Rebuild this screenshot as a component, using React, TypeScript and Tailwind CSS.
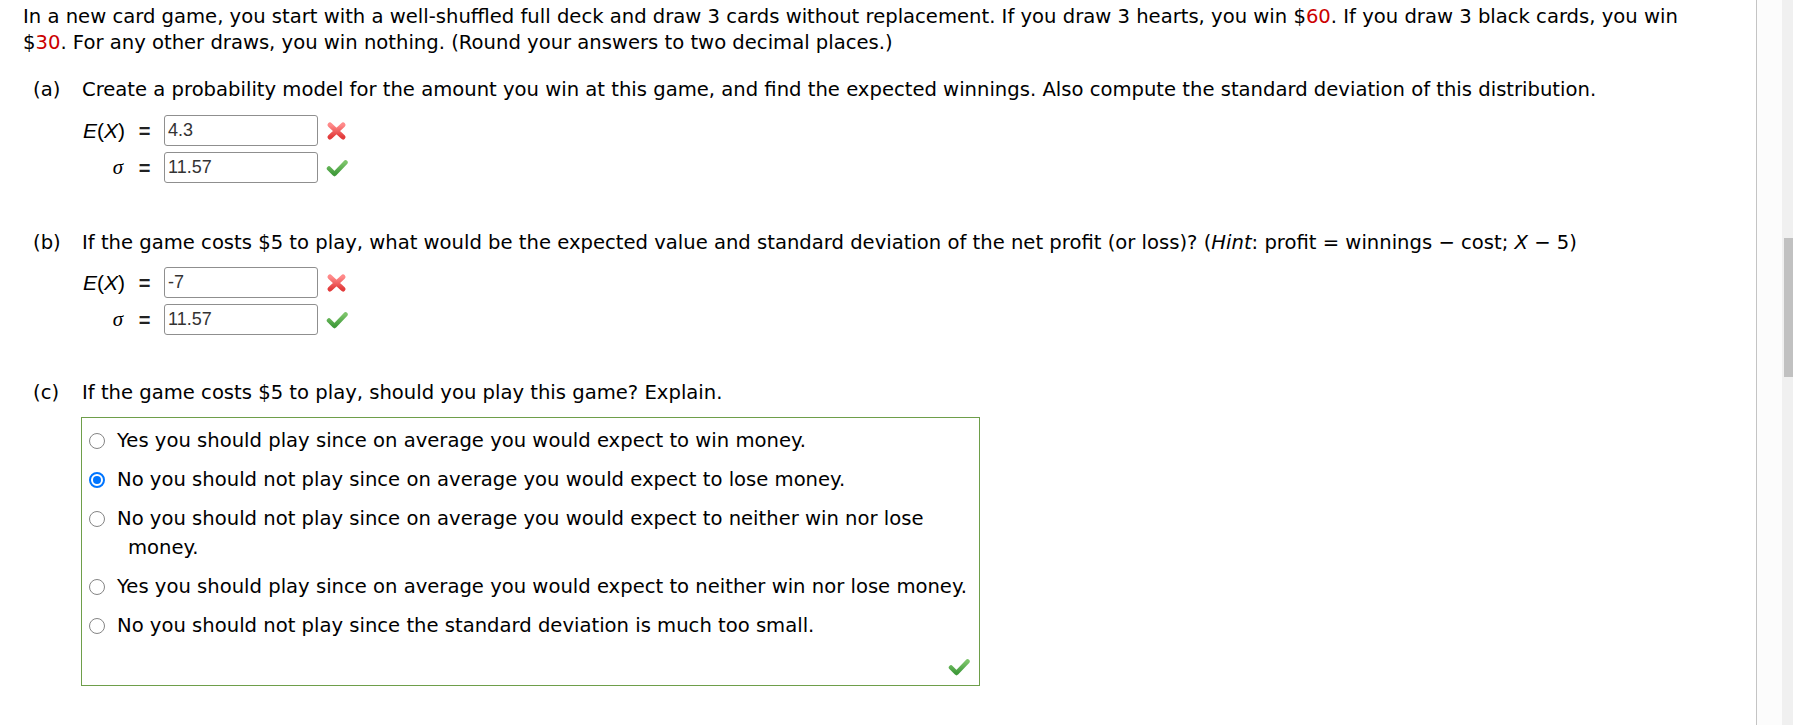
import React from 'react';

const WrongIcon: React.FC = () => (
    <svg width="21" height="20" viewBox="0 0 21 20">
        <defs>
            <linearGradient id="xg" x1="0" y1="0" x2="0" y2="1">
                <stop offset="0" stopColor="#ff8a8a" />
                <stop offset="1" stopColor="#e23b3b" />
            </linearGradient>
        </defs>
        <path d="M4 4 L17 16 M17 4 L4 16" stroke="url(#xg)" strokeWidth="5" strokeLinecap="round" fill="none" />
    </svg>
);

const RightIcon: React.FC = () => (
    <svg width="22" height="18" viewBox="0 0 22 18">
        <defs>
            <linearGradient id="cg" x1="0" y1="0" x2="0" y2="1">
                <stop offset="0" stopColor="#7cc46a" />
                <stop offset="1" stopColor="#3f9a3a" />
            </linearGradient>
        </defs>
        <path d="M3 9.5 L8.5 15 L19.5 3.5" stroke="url(#cg)" strokeWidth="4.5" strokeLinecap="round" strokeLinejoin="round" fill="none" />
    </svg>
);

const AnswerRow: React.FC<{ label: React.ReactNode; value: string; ok: boolean }> = ({ label, value, ok }) => (
    <div className="flex items-center h-[31px]">
        <div className="w-[44px] text-right text-[21px] font-['Liberation_Sans',sans-serif] text-black whitespace-nowrap">{label}</div>
        <div className="w-[39px] text-center text-[20px] font-bold font-['Liberation_Sans',sans-serif] text-[#222]">=</div>
        <div className="w-[154px] h-[31px] border border-[#8f8f8f] rounded-[3px] bg-white flex items-center pl-[3px] text-[18px] text-[#333] font-['Liberation_Sans',sans-serif]">{value}</div>
        <div className="ml-[8px] flex items-center">{ok ? <RightIcon /> : <WrongIcon />}</div>
    </div>
);

const EX = () => (
    <span><i>E</i>(<i>X</i>)</span>
);

const Sigma = () => <i className="font-['Liberation_Serif',serif] pr-[2px]">σ</i>;

const Radio: React.FC<{ checked?: boolean }> = ({ checked }) =>
    checked ? (
        <span className="w-[16px] h-[16px] rounded-full border-2 border-[#0075ff] bg-white flex items-center justify-center">
            <span className="w-[8px] h-[8px] rounded-full bg-[#0075ff]" />
        </span>
    ) : (
        <span className="w-[16px] h-[16px] rounded-full border border-[#858585] bg-white" />
    );

const OPTIONS = [
    { text: 'Yes you should play since on average you would expect to win money.', checked: false },
    { text: 'No you should not play since on average you would expect to lose money.', checked: true },
    { text: 'No you should not play since on average you would expect to neither win nor lose money.', checked: false },
    { text: 'Yes you should play since on average you would expect to neither win nor lose money.', checked: false },
    { text: 'No you should not play since the standard deviation is much too small.', checked: false },
];

const PartLabel: React.FC<{ tag: string; children: React.ReactNode }> = ({ tag, children }) => (
    <div className="flex leading-[26px]">
        <span className="w-[59px] pl-[10px] shrink-0">{tag}</span>
        <span>{children}</span>
    </div>
);

export default function App() {
    return (
        <div className="flex w-full h-[725px] overflow-hidden bg-white">
            <div className="w-[1757px] shrink-0 border-r border-[#c4c4c4] bg-white pl-[23px] pr-[57px] pt-[4px] text-[19.6px] text-black font-['DejaVu_Sans',sans-serif]">
                <p className="leading-[26px]">
                    In a new card game, you start with a well-shuffled full deck and draw 3 cards without replacement. If you draw 3 hearts, you win $<span className="text-[#cc0000]">60</span>. If you draw 3 black cards, you win $<span className="text-[#cc0000]">30</span>. For any other draws, you win nothing. (Round your answers to two decimal places.)
                </p>

                <div className="mt-[21px]">
                    <PartLabel tag="(a)">Create a probability model for the amount you win at this game, and find the expected winnings. Also compute the standard deviation of this distribution.</PartLabel>
                    <div className="mt-[12px] pl-[58px] flex flex-col gap-[6px]">
                        <AnswerRow label={<EX />} value="4.3" ok={false} />
                        <AnswerRow label={<Sigma />} value="11.57" ok={true} />
                    </div>
                </div>

                <div className="mt-[47px]">
                    <PartLabel tag="(b)">If the game costs $5 to play, what would be the expected value and standard deviation of the net profit (or loss)? (<i>Hint</i>: profit = winnings − cost; <i>X</i> − 5)</PartLabel>
                    <div className="mt-[11px] pl-[58px] flex flex-col gap-[6px]">
                        <AnswerRow label={<EX />} value="-7" ok={false} />
                        <AnswerRow label={<Sigma />} value="11.57" ok={true} />
                    </div>
                </div>

                <div className="mt-[45px]">
                    <PartLabel tag="(c)">If the game costs $5 to play, should you play this game? Explain.</PartLabel>
                    <div className="mt-[11px] ml-[58px] w-[899px] border border-[#6e9e4a] pt-[8px] pl-[7px] pr-[4px] pb-[9px] flex flex-col">
                        <div className="flex flex-col gap-[10px]">
                            {OPTIONS.map((o, i) => (
                                <div key={i} className="flex items-start leading-[29px]">
                                    <div className="h-[29px] flex items-center shrink-0">
                                        <Radio checked={o.checked} />
                                    </div>
                                    <div className="ml-[23px] indent-[-11px]">{o.text}</div>
                                </div>
                            ))}
                        </div>
                        <div className="mt-[18px] flex justify-end pr-[5px]">
                            <RightIcon />
                        </div>
                    </div>
                </div>
            </div>
            <div className="flex-1 bg-[#fcfcfc]" />
            <div className="w-[11px] shrink-0 bg-[#f0f0f0]">
                <div className="mt-[238px] ml-[2px] w-[9px] h-[139px] bg-[#c1c1c1]" />
            </div>
        </div>
    );
}
